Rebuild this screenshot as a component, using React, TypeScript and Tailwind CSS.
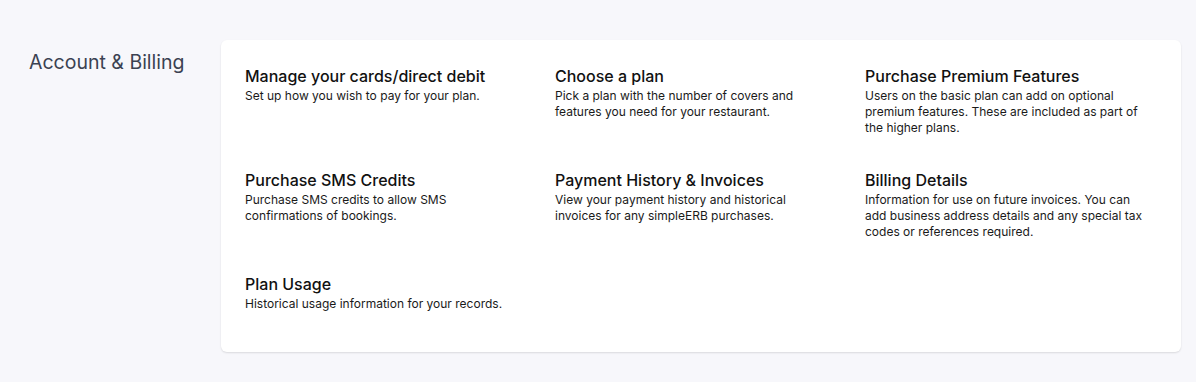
const items = [
  {
    title: 'Manage your cards/direct debit',
    description: 'Set up how you wish to pay for your plan.',
  },
  {
    title: 'Choose a plan',
    description:
      'Pick a plan with the number of covers and features you need for your restaurant.',
  },
  {
    title: 'Purchase Premium Features',
    description:
      'Users on the basic plan can add on optional premium features. These are included as part of the higher plans.',
  },
  {
    title: 'Purchase SMS Credits',
    description: 'Purchase SMS credits to allow SMS confirmations of bookings.',
  },
  {
    title: 'Payment History & Invoices',
    description:
      'View your payment history and historical invoices for any simpleERB purchases.',
  },
  {
    title: 'Billing Details',
    description:
      'Information for use on future invoices. You can add business address details and any special tax codes or references required.',
  },
  {
    title: 'Plan Usage',
    description: 'Historical usage information for your records.',
  },
];

export default function App() {
  return (
    <div
      className="h-[382px] bg-[#f7f7fb] pt-10 pr-[15px] flex items-start"
      style={{ fontFamily: 'Inter, "Noto Sans", sans-serif' }}
    >
      {/* Section label */}
      <div className="w-[221px] shrink-0 pl-[29px]">
        <h2 className="mt-[9px] text-[19.5px] leading-[26px] text-[#3b4252]">
          Account &amp; Billing
        </h2>
      </div>

      {/* Card */}
      <div className="flex-1 rounded-md bg-white pl-6 pt-6 pb-10 shadow-[0_1px_2px_rgba(0,0,0,0.12)]">
        <div className="grid grid-cols-[repeat(3,280px)] gap-x-[30px] gap-y-8">
          {items.map((item) => (
            <div key={item.title}>
              <div className="text-[16px] leading-6 font-medium text-[#111111]">
                {item.title}
              </div>
              <p className="text-[12px] leading-4 text-[#1a1a1a]">
                {item.description}
              </p>
            </div>
          ))}
        </div>
      </div>
    </div>
  );
}
